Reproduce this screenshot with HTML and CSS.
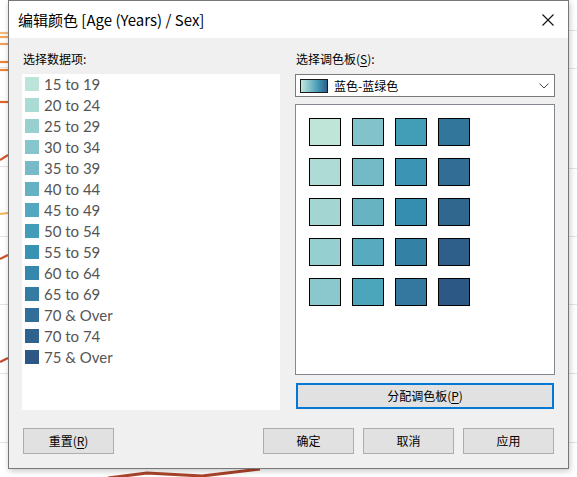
FILE: index.html
```html
<!DOCTYPE html>
<html lang="zh-CN">
<head>
<meta charset="utf-8">
<title>编辑颜色</title>
<link rel="stylesheet" href="styles.css">
</head>
<body>
<svg class="backdrop" width="577" height="477" viewBox="0 0 577 477" aria-hidden="true">
  <g stroke="#e4e4e4" stroke-width="1">
    <line x1="0" y1="67.5" x2="8" y2="67.5"/>
    <line x1="0" y1="166.5" x2="8" y2="166.5"/>
    <line x1="0" y1="236.5" x2="8" y2="236.5"/>
    <line x1="0" y1="304.5" x2="8" y2="304.5"/>
    <line x1="0" y1="373.5" x2="8" y2="373.5"/>
    <line x1="0" y1="442.5" x2="8" y2="442.5"/>
    <line x1="569" y1="30.5" x2="577" y2="30.5"/>
    <line x1="569" y1="68.5" x2="577" y2="68.5"/>
    <line x1="569" y1="168.5" x2="577" y2="168.5"/>
    <line x1="569" y1="236.5" x2="577" y2="236.5"/>
    <line x1="569" y1="304.5" x2="577" y2="304.5"/>
    <line x1="569" y1="373.5" x2="577" y2="373.5"/>
    <line x1="569" y1="442.5" x2="577" y2="442.5"/>
  </g>
  <g fill="none" stroke-width="2.2">
    <line x1="0" y1="33" x2="8" y2="33" stroke="#f3b77a"/>
    <line x1="0" y1="37" x2="8" y2="37" stroke="#f0a75c"/>
    <line x1="0" y1="44" x2="8" y2="44" stroke="#eea060"/>
    <line x1="0" y1="62" x2="8" y2="62" stroke="#ea8434"/>
    <line x1="0" y1="70" x2="8" y2="70" stroke="#ea8434"/>
    <line x1="0" y1="102" x2="8" y2="102" stroke="#e0642a"/>
    <line x1="0" y1="160" x2="8" y2="155" stroke="#d4552a"/>
    <line x1="0" y1="214" x2="8" y2="213" stroke="#f0b452"/>
    <line x1="0" y1="259" x2="8" y2="255" stroke="#d0522a"/>
    <line x1="0" y1="362" x2="8" y2="358" stroke="#c8482a"/>
    <polyline points="108,478 147,473 202,476 260,469" stroke="#a8442a" stroke-width="3"/>
  </g>
</svg>

<div class="dialog">
  <div class="titlebar">
    <span class="title">编辑颜色 [Age (Years) / Sex]</span>
    <span class="close" aria-label="关闭">
      <svg width="12" height="12" viewBox="0 0 12 12"><path d="M0.5 0.5 L11.5 11.5 M11.5 0.5 L0.5 11.5" stroke="#111" stroke-width="1.1" fill="none"/></svg>
    </span>
  </div>
  <div class="content">
    <div class="columns">
      <section class="col-left">
        <div class="label">选择数据项:</div>
        <ul class="items">
          <li><span class="sw" style="background:#bde4da"></span>15 to 19</li>
          <li><span class="sw" style="background:#abdbd5"></span>20 to 24</li>
          <li><span class="sw" style="background:#98d0d0"></span>25 to 29</li>
          <li><span class="sw" style="background:#87c5cc"></span>30 to 34</li>
          <li><span class="sw" style="background:#76bbc7"></span>35 to 39</li>
          <li><span class="sw" style="background:#65b1c3"></span>40 to 44</li>
          <li><span class="sw" style="background:#53a7be"></span>45 to 49</li>
          <li><span class="sw" style="background:#439db8"></span>50 to 54</li>
          <li><span class="sw" style="background:#3892b3"></span>55 to 59</li>
          <li><span class="sw" style="background:#3587ac"></span>60 to 64</li>
          <li><span class="sw" style="background:#347ca2"></span>65 to 69</li>
          <li><span class="sw" style="background:#316f98"></span>70 &amp; Over</li>
          <li><span class="sw" style="background:#2f638e"></span>70 to 74</li>
          <li><span class="sw" style="background:#2d5886"></span>75 &amp; Over</li>
        </ul>
      </section>
      <section class="col-right">
        <div class="label">选择调色板(<u>S</u>):</div>
        <div class="combo">
          <span class="grad"></span>
          <span class="combo-text">蓝色-蓝绿色</span>
          <svg class="chev" width="10" height="6" viewBox="0 0 10 6"><path d="M0.5 0.5 L5 5 L9.5 0.5" stroke="#444" stroke-width="1" fill="none"/></svg>
        </div>
        <div class="palette">
          <div class="grid">
            <span class="pc" style="background:#bfe5d9"></span>
            <span class="pc" style="background:#afdbd6"></span>
            <span class="pc" style="background:#a3d5d2"></span>
            <span class="pc" style="background:#96cfcf"></span>
            <span class="pc" style="background:#8bc8ce"></span>
            <span class="pc" style="background:#82c2ca"></span>
            <span class="pc" style="background:#74bac6"></span>
            <span class="pc" style="background:#67b3c2"></span>
            <span class="pc" style="background:#58aabf"></span>
            <span class="pc" style="background:#4ba5bb"></span>
            <span class="pc" style="background:#429eb6"></span>
            <span class="pc" style="background:#3b94b4"></span>
            <span class="pc" style="background:#358db0"></span>
            <span class="pc" style="background:#3481a6"></span>
            <span class="pc" style="background:#34789f"></span>
            <span class="pc" style="background:#33769b"></span>
            <span class="pc" style="background:#316d95"></span>
            <span class="pc" style="background:#30678f"></span>
            <span class="pc" style="background:#2e5f8a"></span>
            <span class="pc" style="background:#2c5885"></span>
          </div>
        </div>
        <button class="btn btn-focus">分配调色板(<u>P</u>)</button>
      </section>
    </div>
    <div class="footer">
      <button class="btn btn-foot btn-reset">重置(<u>R</u>)</button>
      <div class="spacer"></div>
      <button class="btn btn-foot">确定</button>
      <button class="btn btn-foot">取消</button>
      <button class="btn btn-foot btn-last">应用</button>
    </div>
  </div>
</div>
</body>
</html>
```

FILE: styles.css
```css
html, body {
  margin: 0;
  padding: 0;
}
body {
  width: 577px;
  height: 477px;
  overflow: hidden;
  background: #ffffff;
  position: relative;
  font-family: "Noto Sans CJK SC", "Noto Sans", sans-serif;
  font-size: 12px;
  color: #000;
}
.backdrop {
  position: absolute;
  left: 0;
  top: 0;
}
.dialog {
  position: relative;
  margin-left: 8px;
  width: 561px;
  height: 469px;
  box-sizing: border-box;
  border: 1px solid #777777;
  background: #f0f0f0;
  box-shadow: 1px 2px 6px rgba(0, 0, 0, 0.22);
  display: flex;
  flex-direction: column;
}
.titlebar {
  height: 37px;
  background: #ffffff;
  display: flex;
  align-items: center;
  padding: 0 14px 0 9px;
}
.title {
  font-size: 15px;
  line-height: 37px;
  color: #000;
  flex: 1;
  white-space: nowrap;
}
.close {
  display: flex;
  width: 12px;
  height: 12px;
  margin-top: 1px;
}
.content {
  padding: 12px 13px 14px 13px;
  display: flex;
  flex-direction: column;
}
.columns {
  display: flex;
  gap: 15px;
  align-items: flex-start;
}
.col-left {
  width: 258px;
  display: flex;
  flex-direction: column;
}
.col-right {
  width: 260px;
  display: flex;
  flex-direction: column;
}
.label {
  height: 18px;
  line-height: 18px;
  margin-bottom: 6px;
  padding-left: 1px;
  white-space: nowrap;
}
u {
  text-decoration: underline;
  text-underline-offset: 2px;
}
.items {
  list-style: none;
  margin: 0;
  padding: 3px 0 0 3px;
  height: 336px;
  box-sizing: border-box;
  background: #ffffff;
}
.items li {
  height: 21px;
  display: flex;
  align-items: flex-start;
  gap: 5px;
  font-family: "Lato", "Open Sans", sans-serif;
  font-size: 15px;
  line-height: 14px;
  color: #555555;
  white-space: nowrap;
}
.sw {
  width: 14px;
  height: 14px;
  flex: none;
}
.combo {
  height: 23px;
  box-sizing: border-box;
  border: 1px solid #7a7a7a;
  background: #ffffff;
  display: flex;
  align-items: center;
  padding: 0 4px 0 4px;
  margin-bottom: 7px;
}
.grad {
  width: 28px;
  height: 14px;
  box-sizing: border-box;
  border: 1px solid #1a1a1a;
  background: linear-gradient(to right, #c3e7dd, #7fbfc9 35%, #3e93b2 70%, #2d5f8b);
  flex: none;
}
.combo-text {
  margin-left: 6px;
  flex: 1;
  line-height: 18px;
}
.chev {
  margin-right: 1px;
}
.palette {
  height: 271px;
  box-sizing: border-box;
  border: 1px solid #828790;
  background: #ffffff;
  padding: 13px;
  margin-bottom: 8px;
}
.grid {
  display: grid;
  grid-auto-flow: column;
  grid-template-rows: repeat(5, 28px);
  grid-template-columns: repeat(4, 32px);
  column-gap: 11px;
  row-gap: 12px;
}
.pc {
  box-sizing: border-box;
  border: 1px solid #000000;
}
.btn {
  font-family: "Noto Sans CJK SC", "Noto Sans", sans-serif;
  font-size: 12px;
  color: #000;
  background: #e1e1e1;
  box-sizing: border-box;
  height: 26px;
  padding: 0;
  line-height: 20px;
  cursor: default;
}
.btn-focus {
  border: 2px solid #0078d7;
  margin: 0 1px;
  width: 258px;
}
.footer {
  display: flex;
  margin-top: 18px;
  gap: 9px;
}
.spacer {
  flex: 1;
}
.btn-foot {
  width: 91px;
  border: 1px solid #adadad;
}
.btn-reset {
  margin-left: 1px;
}
.btn-last {
  margin-right: 1px;
}
```
